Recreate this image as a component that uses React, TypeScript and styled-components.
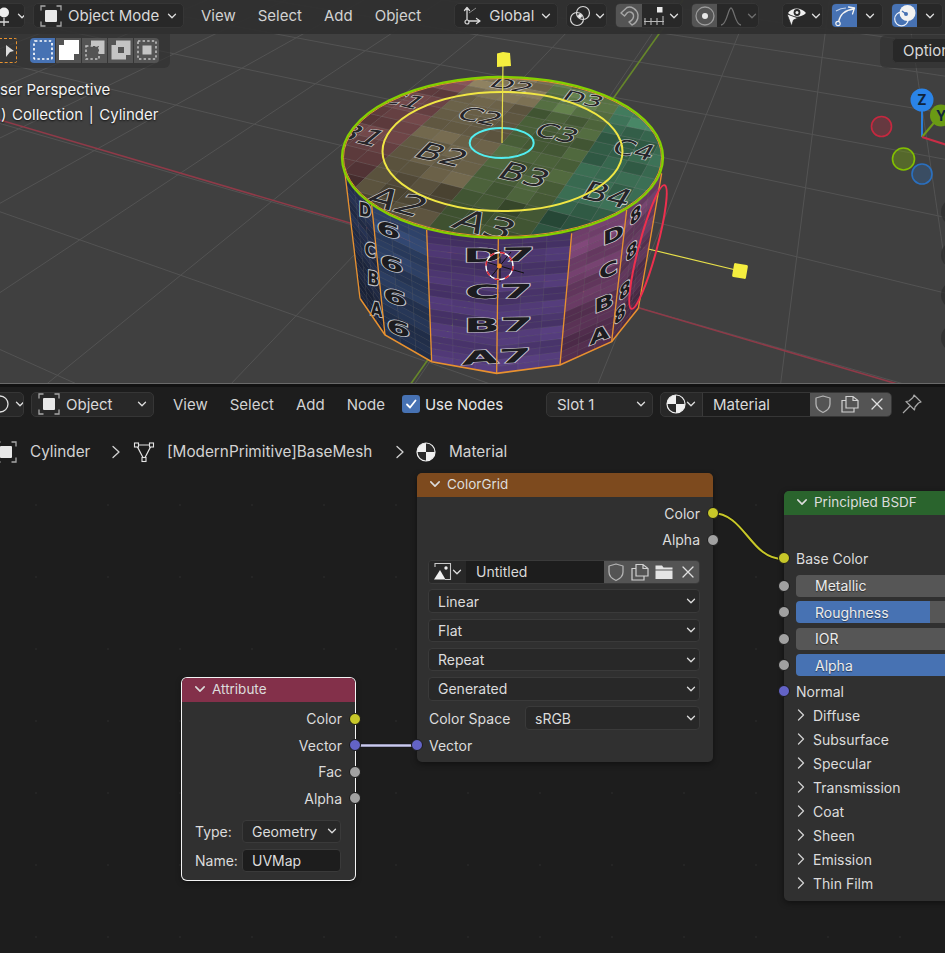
import React from "react";
import styled, { createGlobalStyle } from "styled-components";

const Global = createGlobalStyle`
  html, body { margin: 0; padding: 0; background: #1d1d1d; }
  body { font-family: Inter, "Noto Sans", "Liberation Sans", sans-serif; }
  svg { flex: none; }
`;

/* ---------- scene geometry ---------- */
const zx = (z: number) => z / 3 + 330;
const zy = (z: number) => z / 3 + 60;
const noise = (a: number, b: number) => {
  const s = Math.sin(a * 12.9898 + b * 78.233) * 43758.5453;
  return s - Math.floor(s);
};
const rgb = (c: number[], m: number) =>
  `rgb(${Math.round(c[0] * m)},${Math.round(c[1] * m)},${Math.round(c[2] * m)})`;

const VPX = [-1400, -280];
const VPY = [865, -280];
const groundLines = () => {
  const out: { x1: number; y1: number; x2: number; y2: number }[] = [];
  for (let k = -4; k <= 6; k++) {
    const d = 1 / (1 / 546 + 0.000273 * k);
    const gy = d - 280;
    const gx = 683 - 0.709 * gy;
    const t = 4;
    out.push({ x1: VPX[0], y1: VPX[1], x2: VPX[0] + (gx - VPX[0]) * t, y2: VPX[1] + (gy - VPX[1]) * t });
  }
  for (let k = -10; k <= 3; k++) {
    const d = 1 / (1 / 1895 - 0.000035 * k);
    const rx = d - 1400;
    const ry = 120 + 0.294 * rx;
    const t = 4;
    out.push({ x1: VPY[0], y1: VPY[1], x2: VPY[0] + (rx - VPY[0]) * t, y2: VPY[1] + (ry - VPY[1]) * t });
  }
  return out;
};
const GROUND = groundLines();

const X2 = (r: number) => 200 + 145 * r - 10 * r * r;
const Y2 = (r: number) => 425 - 152 * r + 12 * r * r;
const top = (c: number, r: number): [number, number] => [
  zx(X2(r) + (c - 2) * (265 - 17 * r)),
  zy(Y2(r) + (c - 2) * (70 - 10 * r)),
];

const TOP_COL: Record<number, number[]> = {
  0: [100, 62, 64],
  1: [108, 68, 70],
  2: [112, 102, 76],
  3: [80, 104, 62],
  4: [58, 108, 82],
  5: [58, 108, 82],
};
const rowMul = (r: number) => (r < 0 ? 0.72 : r < 1 ? 0.76 : r < 3 ? 0.95 : 1.14);

const topCells = (() => {
  const out: { p: string; f: string }[] = [];
  for (let cc = 0; cc < 24; cc++) {
    for (let rr = 0; rr < 24; rr++) {
      const c = 0.5 + cc * 0.25;
      const r = -1.5 + rr * 0.25;
      const pts = [top(c, r), top(c + 0.25, r), top(c + 0.25, r + 0.25), top(c, r + 0.25)];
      const band = Math.min(5, Math.max(0, Math.floor(c + 0.5)));
      const rowI = Math.floor(r + 0.5);
      const n = 0.84 + noise(cc, rr) * 0.28;
      out.push({
        p: pts.map((q) => q.map((v) => v.toFixed(1)).join(",")).join(" "),
        f: rgb(TOP_COL[band], rowMul(rowI) * n),
      });
    }
  }
  return out;
})();

const topLabels: [string, number, number][] = [
  ["A2", 2, 0], ["A3", 3, 0], ["B1", 1, 1], ["B2", 2, 1], ["B3", 3, 1], ["B4", 4, 1],
  ["C1", 1, 2], ["C2", 2, 2], ["C3", 3, 2], ["C4", 4, 2], ["D2", 2, 3], ["D3", 3, 3],
];
const topMatrix = (c: number, r: number) => {
  const [px, py] = top(c, r);
  const ux = (265 - 17 * r) / 3;
  const uy = (70 - 10 * r) / 3;
  const vx = (145 - 20 * r - 17 * (c - 2)) / 3;
  const vy = (-152 + 24 * r - 10 * (c - 2)) / 3;
  const a = (r === 0 ? 0.62 : r === 1 ? 0.55 : 0.5) / 26;
  const b = 0.34 / 14.3;
  return `matrix(${ux * a} ${uy * a} ${-vx * b} ${-vy * b} ${px} ${py})`;
};

const SIDE_TOP = [[45, 340], [125, 435], [290, 510], [505, 535], [725, 520], [890, 450], [995, 340]];
const SIDE_BOT = [[90, 715], [165, 825], [305, 905], [500, 940], [690, 915], [845, 845], [925, 745]];
const SIDE_BASE = [
  [38, 50, 82],
  [48, 68, 108],
  [76, 54, 112],
  [78, 56, 114],
  [118, 66, 112],
  [108, 62, 102],
];
const lerp = (a: number, b: number, t: number) => a + (b - a) * t;
const sidePoint = (f: number, s: number, t: number) => {
  const tx = lerp(SIDE_TOP[f][0], SIDE_TOP[f + 1][0], s);
  const ty = lerp(SIDE_TOP[f][1], SIDE_TOP[f + 1][1], s);
  const bx = lerp(SIDE_BOT[f][0], SIDE_BOT[f + 1][0], s);
  const by = lerp(SIDE_BOT[f][1], SIDE_BOT[f + 1][1], s);
  return [zx(lerp(tx, bx, t)).toFixed(1), zy(lerp(ty, by, t)).toFixed(1)].join(",");
};
const sideCells = (() => {
  const out: { p: string; f: string }[] = [];
  for (let f = 0; f < 6; f++) {
    for (let i = 0; i < 3; i++) {
      for (let j = 0; j < 20; j++) {
        const s0 = i / 3;
        const s1 = (i + 1) / 3;
        const t0 = j / 20;
        const t1 = (j + 1) / 20;
        const wave = j % 4 < 2 ? 0.91 : 1.04;
        const fade = f < 2 ? 1.05 - t0 * 0.4 : f >= 4 ? 1.06 - t0 * 0.42 : 0.95 + t0 * 0.12;
        out.push({
          p: [sidePoint(f, s0, t0), sidePoint(f, s1, t0), sidePoint(f, s1, t1), sidePoint(f, s0, t1)].join(" "),
          f: rgb(SIDE_BASE[f], wave * fade * (0.95 + noise(f * 3 + i, j) * 0.1)),
        });
      }
    }
  }
  return out;
})();

type SideLabel = [string, number, number, number, number];
const sideLabels: SideLabel[] = [
  ["D", 105, 450, 0.8, 12], ["C", 120, 570, 0.8, 12], ["B", 130, 655, 0.8, 12], ["A", 140, 748, 0.8, 12],
  ["6", 175, 510, 1.8, 17], ["6", 185, 612, 1.8, 17], ["6", 195, 712, 1.8, 17], ["6", 205, 805, 1.8, 17],
  ["D7", 507, 585, 2.5, -1], ["C7", 507, 695, 2.5, -1], ["B7", 505, 795, 2.5, -1], ["A7", 500, 890, 2.5, -3],
  ["D", 850, 525, 1.35, -22], ["C", 835, 630, 1.35, -22], ["B", 822, 730, 1.35, -22], ["A", 808, 825, 1.35, -22],
  ["8", 917, 465, 0.9, -42], ["8", 905, 572, 0.9, -42], ["8", 885, 690, 0.9, -42], ["8", 870, 762, 0.9, -42],
];

const CylinderScene = () => (
  <SceneSvg viewBox="0 0 945 383">
    <defs>
      <clipPath id="disc">
        <ellipse cx="502.5" cy="157.5" rx="160.5" ry="80.5" />
      </clipPath>
    </defs>
    {GROUND.map((l, i) => (
      <line key={i} {...l} stroke="#535353" strokeWidth="1" />
    ))}
    <line x1="0" y1="120" x2="945" y2="398" stroke="#8f3a48" strokeWidth="1.6" />
    <line x1="683" y1="0" x2="405" y2="392" stroke="#66872a" strokeWidth="1.6" />
    <line x1="640" y1="247" x2="740" y2="271" stroke="#e8e04a" strokeWidth="1.2" />
    <rect x="733" y="264" width="14" height="14" rx="1.5" fill="#f5ee3f" transform="rotate(10 740 271)" />

    {sideCells.map((c, i) => (
      <polygon key={i} points={c.p} fill={c.f} stroke="rgba(255,255,255,0.07)" strokeWidth="0.6" />
    ))}
    {sideLabels.map(([t, x, y, sx, sk], i) => (
      <SideText
        key={i}
        transform={`translate(${zx(x)} ${zy(y)}) skewY(${sk}) scale(${sx} 1)`}
        textAnchor="middle"
        dominantBaseline="central"
        fontSize="19"
      >
        {t}
      </SideText>
    ))}
    {SIDE_TOP.map((p, i) => (
      <line
        key={i}
        x1={zx(p[0])}
        y1={zy(p[1])}
        x2={zx(SIDE_BOT[i][0])}
        y2={zy(SIDE_BOT[i][1])}
        stroke="#e8912f"
        strokeWidth="1.3"
      />
    ))}
    <polyline
      points={SIDE_BOT.map((p) => `${zx(p[0])},${zy(p[1])}`).join(" ")}
      fill="none"
      stroke="#e8912f"
      strokeWidth="1.6"
    />

    <g clipPath="url(#disc)">
      {topCells.map((c, i) => (
        <polygon key={i} points={c.p} fill={c.f} stroke="rgba(255,255,255,0.13)" strokeWidth="0.6" />
      ))}
      {topLabels.map(([t, c, r]) => (
        <LabelText key={t} transform={topMatrix(c, r)} textAnchor="middle" dominantBaseline="central" fontSize="20">
          {t}
        </LabelText>
      ))}
    </g>
    <ellipse cx="502.5" cy="157.5" rx="159" ry="79" fill="none" stroke="#e8912f" strokeWidth="1" />
    <ellipse cx="502.5" cy="157.5" rx="160.5" ry="80.5" fill="none" stroke="#84d000" strokeWidth="2.3" />
    <ellipse cx="502.5" cy="151.5" rx="120" ry="59.5" fill="none" stroke="#f0e644" strokeWidth="2" />
    <ellipse cx="501.7" cy="143" rx="32" ry="15" fill="none" stroke="#52eef0" strokeWidth="2" />
    <line x1="502" y1="143" x2="503" y2="60" stroke="#e8e04a" strokeWidth="1.2" />
    <path d="M497 53.5 L503 52 L510 53 L511 66 L497 67 Z" fill="#f5ee3f" />

    <ellipse cx="648" cy="247" rx="9" ry="64" transform="rotate(15 648 247)" fill="none" stroke="#ee2f4e" strokeWidth="2" />

    <g fill="none">
      <line x1="500" y1="250" x2="500" y2="282" stroke="#111" strokeWidth="1" />
      <line x1="486" y1="262" x2="524" y2="273" stroke="#111" strokeWidth="1" />
      <line x1="490" y1="278" x2="511" y2="252" stroke="#111" strokeWidth="1" />
      <circle cx="499.5" cy="266" r="13.5" stroke="#ffffff" strokeWidth="1.4" />
      <circle cx="499.5" cy="266" r="13.5" stroke="#d8202e" strokeWidth="1.4" strokeDasharray="5 5.6" />
    </g>
    <circle cx="499.5" cy="266" r="2.4" fill="#f0902a" />

    <line x1="922" y1="137" x2="922" y2="108" stroke="#2a7fdc" strokeWidth="2" />
    <line x1="922" y1="137" x2="938" y2="118" stroke="#6f9a18" strokeWidth="2" />
    <line x1="922" y1="137" x2="947" y2="145" stroke="#c92d46" strokeWidth="2" />
    <circle cx="881.5" cy="126.5" r="10" fill="rgba(200,40,64,0.28)" stroke="#c6283f" strokeWidth="1.6" />
    <circle cx="903.5" cy="159" r="11" fill="rgba(120,170,10,0.38)" stroke="#82c000" strokeWidth="1.6" />
    <circle cx="922" cy="174" r="10" fill="rgba(42,110,190,0.28)" stroke="#2a70c0" strokeWidth="1.6" />
    <circle cx="922" cy="100" r="11.5" fill="#2a84e8" />
    <circle cx="941" cy="115.5" r="11" fill="#6a9a14" />
    <AxisText x="922" y="105" textAnchor="middle">Z</AxisText>
    <AxisText x="941" y="120.5" textAnchor="middle">Y</AxisText>
  </SceneSvg>
);

/* ---------- styled parts ---------- */
const Page = styled.div`
  width: 945px;
  height: 953px;
  overflow: hidden;
  display: flex;
  flex-direction: column;
  background: #1d1d1d;
  color: #d9d9d9;
  font-size: 15px;
`;
const Viewport = styled.section`
  position: relative;
  height: 383px;
  flex: none;
  background: #404040;
  overflow: hidden;
  border-bottom: 1px solid #6a6a6a;
`;
const SceneSvg = styled.svg`
  position: absolute;
  inset: 0;
  width: 945px;
  height: 383px;
`;
const LabelText = styled.text`
  font-family: "DejaVu Sans", sans-serif;
  fill: #26262a;
  stroke: rgba(225, 225, 225, 0.85);
  stroke-width: 1.6px;
  paint-order: stroke;
  vector-effect: non-scaling-stroke;
`;
const SideText = styled(LabelText)`
  font-weight: 700;
  fill: #1c1c20;
  stroke-width: 2px;
`;
const AxisText = styled.text`
  font-family: Inter, sans-serif;
  font-weight: 700;
  font-size: 14px;
  fill: #10243a;
`;
const ViewHeader = styled.header`
  position: relative;
  height: 34px;
  background: rgba(48, 48, 48, 0.96);
  display: flex;
  align-items: center;
  gap: 8px;
  padding-bottom: 3px;
  box-sizing: border-box;
`;
const Drop = styled.div<{ $w: number; $ml?: number; $mr?: number }>`
  box-sizing: border-box;
  flex: none;
  width: ${(p) => p.$w}px;
  margin-left: ${(p) => p.$ml ?? 0}px;
  margin-right: ${(p) => p.$mr ?? 0}px;
  height: 25px;
  display: flex;
  align-items: center;
  background: #282828;
  border: 1px solid #363636;
  border-radius: 5px;
  overflow: hidden;
  color: #d9d9d9;
`;
const DropLabel = styled.span<{ $pl?: number }>`
  flex: 1;
  white-space: nowrap;
  padding-left: ${(p) => p.$pl ?? 0}px;
`;
const IconSlot = styled.span<{ $w: number; $on?: "blue" | "grey" | "field"; $pl?: number; $divider?: boolean }>`
  flex: none;
  box-sizing: border-box;
  width: ${(p) => p.$w}px;
  height: 100%;
  display: flex;
  align-items: center;
  justify-content: center;
  padding-left: ${(p) => p.$pl ?? 0}px;
  border-right: ${(p) => (p.$divider ? "1px solid #3a3a3a" : "none")};
  background: ${(p) =>
    p.$on === "blue" ? "#4772b3" : p.$on === "grey" ? "#545454" : p.$on === "field" ? "#282828" : "transparent"};
`;
const PinSlot = styled.span`
  flex: none;
  margin-left: 2px;
  width: 22px;
  height: 22px;
  display: flex;
`;
const MenuBar = styled.nav<{ $ml: number; $mr: number }>`
  display: flex;
  gap: 22px;
  margin-left: ${(p) => p.$ml}px;
  margin-right: ${(p) => p.$mr}px;
  flex: none;
`;
const Menu = styled.span`
  color: #d2d2d2;
`;
const Spacer = styled.div`
  flex: 1;
`;
const ToolRow = styled.div`
  position: relative;
  width: 170px;
  height: 34px;
  background: rgba(48, 48, 48, 0.62);
  border-radius: 0 0 6px 0;
  display: flex;
  align-items: center;
  box-sizing: border-box;
  padding: 0 0 2px 30px;
`;
const ToolIcon = styled.div`
  position: absolute;
  left: -8px;
  top: 4px;
  width: 24.5px;
  height: 25px;
  box-sizing: border-box;
  border: 1.5px dashed #e8922e;
  border-radius: 2px;
  display: flex;
  align-items: center;
  justify-content: flex-end;
  padding-right: 1px;
`;
const SegGroup = styled.div`
  display: flex;
  gap: 1px;
  border-radius: 4px;
  overflow: hidden;
`;
const Seg = styled.div<{ $active?: boolean }>`
  width: 25px;
  height: 25px;
  display: flex;
  align-items: center;
  justify-content: center;
  background: ${(p) => (p.$active ? "#4772b3" : "#545454")};
`;
const OverlayText = styled.div`
  position: relative;
  margin-top: 9px;
  color: #f2f2f2;
  font-size: 15px;
  line-height: 25px;
  text-shadow: 0 1px 2px rgba(0, 0, 0, 0.8);
`;
const OverlayLine = styled.div<{ $ws?: number; $ml?: number }>`
  word-spacing: ${(p) => p.$ws ?? 0}px;
  margin-left: ${(p) => p.$ml ?? 0}px;
`;
const OptionsPanel = styled.div`
  position: absolute;
  right: 0;
  top: 35px;
  width: 65px;
  height: 33px;
  background: rgba(48, 48, 48, 0.62);
  border-radius: 6px 0 0 6px;
  padding: 3px 0 0 12px;
  box-sizing: border-box;
  overflow: hidden;
`;
const OptionsBtn = styled.div`
  width: 70px;
  height: 25px;
  box-sizing: border-box;
  background: #282828;
  border: 1px solid #363636;
  border-radius: 5px;
  padding-left: 10px;
  line-height: 23px;
  white-space: nowrap;
`;
const GizmoBtn = styled.div<{ $y: number }>`
  position: absolute;
  left: 941px;
  top: ${(p) => p.$y - 14}px;
  width: 28px;
  height: 28px;
  border-radius: 50%;
  background: rgba(44, 44, 44, 0.7);
`;
const Gap = styled.div`
  height: 3px;
  flex: none;
  background: #121212;
`;
const Editor = styled.section`
  position: relative;
  flex: 1;
  display: flex;
  flex-direction: column;
`;
const NodeHeader = styled.header`
  height: 34px;
  box-sizing: border-box;
  display: flex;
  align-items: center;
  gap: 7px;
  flex: none;
`;
const Check = styled.span`
  width: 18px;
  height: 18px;
  border-radius: 3px;
  background: #4772b3;
  display: flex;
  align-items: center;
  justify-content: center;
  margin-right: 5px;
`;
const CheckWrap = styled.label`
  display: flex;
  align-items: center;
  width: 137px;
  color: #e6e6e6;
  flex: none;
`;
const FieldText = styled.span<{ $w: number; $pl?: number }>`
  flex: none;
  box-sizing: border-box;
  width: ${(p) => p.$w}px;
  height: 100%;
  display: flex;
  align-items: center;
  padding-left: ${(p) => p.$pl ?? 10}px;
  background: #1d1d1d;
  color: #d9d9d9;
`;
const Crumbs = styled.div`
  height: 48px;
  box-sizing: border-box;
  padding-top: 13px;
  flex: none;
  display: flex;
  align-items: center;
  color: #d2d2d2;
  font-size: 15.3px;
  white-space: nowrap;
`;
const CrumbSlot = styled.span<{ $w: number }>`
  flex: none;
  width: ${(p) => p.$w}px;
  display: flex;
  align-items: center;
`;
const CrumbObject = styled.span`
  display: flex;
  margin-left: -5px;
`;
const Canvas = styled.div`
  position: relative;
  flex: 1;
  overflow: hidden;
  background-color: #1d1d1d;
  background-image: radial-gradient(circle, #252525 1px, transparent 1.4px);
  background-size: 72px 72px;
`;
const LinkSvg = styled.svg`
  position: absolute;
  inset: 0;
  width: 945px;
  height: 484px;
`;
const Node = styled.article<{ $x: number; $y: number; $w: number; $selected?: boolean }>`
  position: absolute;
  left: ${(p) => p.$x}px;
  top: ${(p) => p.$y}px;
  width: ${(p) => p.$w}px;
  box-sizing: border-box;
  background: #303030;
  border-radius: 5px;
  font-size: 14px;
  color: #dcdcdc;
  box-shadow: ${(p) => (p.$selected ? "0 0 0 1px #f4f4f4," : "")} 0 2px 6px rgba(0, 0, 0, 0.45);
`;
const NodeTitle = styled.div<{ $bg: string }>`
  height: 24px;
  box-sizing: border-box;
  background: ${(p) => p.$bg};
  border-radius: 5px 5px 0 0;
  display: flex;
  align-items: center;
  gap: 6px;
  padding: 0 0 3px 12px;
  font-size: 13.5px;
`;
const VSpace = styled.div<{ $h: number }>`
  height: ${(p) => p.$h}px;
`;
const Socket = styled.i<{ $side: "l" | "r"; $c: string }>`
  position: absolute;
  top: 50%;
  ${(p) => (p.$side === "l" ? "left: -6px;" : "right: -6px;")}
  width: 10px;
  height: 10px;
  margin-top: -6px;
  border-radius: 50%;
  background: ${(p) => p.$c};
  border: 1px solid #1a1a1a;
`;
const SockRow = styled.div<{ $side: "l" | "r"; $mt?: number }>`
  position: relative;
  height: ${(p) => (p.$mt ? 24 : 26.5)}px;
  margin-top: ${(p) => p.$mt ?? 0}px;
  display: flex;
  align-items: center;
  justify-content: ${(p) => (p.$side === "l" ? "flex-start" : "flex-end")};
  padding: 0 13px 0 12px;
`;
const Widgets = styled.div<{ $tight?: boolean }>`
  display: flex;
  flex-direction: column;
  gap: ${(p) => (p.$tight ? 5.5 : 5.8)}px;
  margin: ${(p) => (p.$tight ? "8px 14px 0 12px" : "7px 13px 0 11px")};
  padding-bottom: ${(p) => (p.$tight ? 8 : 0)}px;
`;
const Select = styled.div<{ $w?: number }>`
  box-sizing: border-box;
  height: 23.5px;
  flex: none;
  width: ${(p) => (p.$w ? `${p.$w}px` : "100%")};
  display: flex;
  align-items: center;
  justify-content: space-between;
  padding: 0 3px 0 9px;
  background: #282828;
  border: 1px solid #3a3a3a;
  border-radius: 4px;
`;
const TextField = styled(Select)`
  background: #1d1d1d;
`;
const FormRow = styled.div`
  display: flex;
  align-items: center;
  justify-content: space-between;
  height: 23.5px;
  padding-left: 1px;
`;
const ImageRow = styled.div`
  display: flex;
  height: 23.5px;
  border-radius: 4px;
  overflow: hidden;
  border: 1px solid #3a3a3a;
  box-sizing: border-box;
`;
const Slider = styled.div<{ $fill: number }>`
  position: relative;
  height: 22px;
  margin: 0 0 4.67px 12px;
  padding-left: 19px;
  display: flex;
  align-items: center;
  border-radius: 4px 0 0 4px;
  color: #ececec;
  text-shadow: 0 1px 1px rgba(0, 0, 0, 0.5);
  background: linear-gradient(
    to right,
    #4772b3 ${(p) => p.$fill}%,
    #565656 ${(p) => p.$fill}%
  );
`;
const SliderRowWrap = styled.div`
  position: relative;
`;
const SliderSocket = styled(Socket)`
  left: -6px;
  top: 11px;
`;
const PanelRow = styled.div`
  height: 24px;
  display: flex;
  align-items: center;
  gap: 8px;
  padding-left: 13px;
`;

/* ---------- icons ---------- */
const Chevron = ({ dim, size = 10 }: { dim?: boolean; size?: number }) => (
  <svg width={size} height={size} viewBox="0 0 10 10">
    <path d="M1.5 3.2 L5 6.8 L8.5 3.2" fill="none" stroke={dim ? "#6e6e6e" : "#dcdcdc"} strokeWidth="1.3" strokeLinecap="round" strokeLinejoin="round" />
  </svg>
);
const ObjectIcon = () => (
  <svg width="22" height="22" viewBox="0 0 22 22">
    <rect x="5" y="5" width="12" height="12" rx="1" fill="#e8e8e8" />
    <path d="M1 5.5 V1 H5.5 M16.5 1 H21 V5.5 M21 16.5 V21 H16.5 M5.5 21 H1 V16.5" fill="none" stroke="#a8a8a8" strokeWidth="1.3" />
  </svg>
);
const ShieldIcon = () => (
  <svg width="18" height="20" viewBox="0 0 18 20">
    <path d="M9 2 L16 4 V10 C16 14 12.5 17 9 18.5 C5.5 17 2 14 2 10 V4 Z" fill="none" stroke="#b4b4b4" strokeWidth="1.3" strokeLinejoin="round" />
  </svg>
);
const CopyIcon = () => (
  <svg width="20" height="20" viewBox="0 0 20 20">
    <path d="M6 14 V2.5 H13 L18 6.5 V14 Z M13 2.5 V6.5 H18" fill="none" stroke="#d0d0d0" strokeWidth="1.2" />
    <path d="M6 6.5 H2 V18 H14 V14" fill="none" stroke="#d0d0d0" strokeWidth="1.2" />
  </svg>
);
const CloseIcon = () => (
  <svg width="14" height="14" viewBox="0 0 14 14">
    <path d="M2 2 L12 12 M12 2 L2 12" stroke="#e0e0e0" strokeWidth="1.3" strokeLinecap="round" />
  </svg>
);
const FolderIcon = () => (
  <svg width="20" height="18" viewBox="0 0 20 18">
    <path d="M1.5 2.5 H8 L9.5 4.5 H18.5 V6.5 H1.5 Z M1.5 7.5 H18.5 V16 H1.5 Z" fill="#e4e4e4" />
  </svg>
);
const BallIcon = ({ size = 20 }: { size?: number }) => (
  <svg width={size} height={size} viewBox="0 0 20 20">
    <circle cx="10" cy="10" r="9" fill="#2a2a2a" stroke="#f0f0f0" strokeWidth="1.2" />
    <path d="M10 10 V1 A9 9 0 0 0 1 10 Z M10 10 V19 A9 9 0 0 0 19 10 Z" fill="#f0f0f0" />
  </svg>
);
const CrumbChevron = () => (
  <svg width="10" height="14" viewBox="0 0 10 14">
    <path d="M2 1.5 L8 7 L2 12.5" fill="none" stroke="#d2d2d2" strokeWidth="1.3" strokeLinecap="round" strokeLinejoin="round" />
  </svg>
);
const MeshIcon = () => (
  <svg width="22" height="22" viewBox="0 0 22 22">
    <path d="M3.5 4 H18.5 L11 18.5 Z" fill="none" stroke="#e4e4e4" strokeWidth="1.2" />
    <rect x="1.5" y="2" width="4" height="4" fill="#1d1d1d" stroke="#e4e4e4" strokeWidth="1.1" />
    <rect x="16.5" y="2" width="4" height="4" fill="#1d1d1d" stroke="#e4e4e4" strokeWidth="1.1" />
    <rect x="9" y="16.5" width="4" height="4" fill="#1d1d1d" stroke="#e4e4e4" strokeWidth="1.1" />
  </svg>
);
const ImageIcon = () => (
  <svg width="19" height="19" viewBox="0 0 19 19">
    <path d="M2 5 V1.5 H17.5 V17.5 H12" fill="none" stroke="#c8c8c8" strokeWidth="1.1" />
    <path d="M1 17.5 L7 8 L12.5 17.5 Z" fill="#f0f0f0" />
    <circle cx="13" cy="6" r="1.7" fill="#f0f0f0" />
  </svg>
);
const PinIcon = () => (
  <svg width="22" height="22" viewBox="0 0 22 22">
    <path d="M13 2 L20 9 L17.5 10 L14 14 L13.5 17 L5 8.5 L8 8 L12 4.5 Z M9 13 L2 20" fill="none" stroke="#a8a8a8" strokeWidth="1.2" strokeLinejoin="round" />
  </svg>
);
const EditorViewIcon = () => (
  <svg width="18" height="24" viewBox="0 0 18 24">
    <circle cx="5" cy="8.5" r="5" fill="#efefef" />
    <path d="M5 14 V22 M0 18 H10" stroke="#d8d8d8" strokeWidth="1.3" />
  </svg>
);
const NodeEditorIcon = () => (
  <svg width="16" height="22" viewBox="0 0 16 22">
    <circle cx="1" cy="11" r="8" fill="none" stroke="#e0e0e0" strokeWidth="1.3" />
  </svg>
);
const TransformIcon = () => (
  <svg width="24" height="24" viewBox="0 0 24 24">
    <path d="M7 4 V17 H19 M4.5 6.5 L7 3.5 L9.5 6.5 M16.5 14.5 L20 17 L16.5 19.5" fill="none" stroke="#d8d8d8" strokeWidth="1.3" strokeLinecap="round" strokeLinejoin="round" />
    <circle cx="7" cy="18" r="2" fill="#282828" stroke="#d8d8d8" strokeWidth="1.2" />
    <path d="M9 9 L16 4" stroke="#8a8a8a" strokeWidth="1" />
  </svg>
);
const LinkIcon = () => (
  <svg width="22" height="22" viewBox="0 0 22 22">
    <circle cx="8" cy="14" r="6.5" fill="none" stroke="#d8d8d8" strokeWidth="1.2" />
    <circle cx="14" cy="8" r="6.5" fill="none" stroke="#d8d8d8" strokeWidth="1.2" />
    <circle cx="11" cy="11" r="2" fill="#efefef" />
  </svg>
);
const MagnetIcon = () => (
  <svg width="22" height="22" viewBox="0 0 22 22">
    <path d="M3 8 L9 2.5 C13 1 19 4 20 10 C20.5 15 17 19 14 20 L11 17 C14 15.5 16 13 15.5 10 C15 7.5 12 6 9.5 7.5 L6.5 11 Z" fill="none" stroke="#a6a6a6" strokeWidth="1.4" strokeLinejoin="round" />
  </svg>
);
const IncrementIcon = () => (
  <svg width="22" height="24" viewBox="0 0 22 24">
    <rect x="14" y="3" width="5.5" height="5.5" fill="#e8e8e8" />
    <path d="M1 17.5 H21 M2 14 V21 M8 14 V21 M14 14 V21 M20 12 V21" stroke="#b8b8b8" strokeWidth="1.1" />
  </svg>
);
const ProportionalIcon = () => (
  <svg width="22" height="22" viewBox="0 0 22 22">
    <circle cx="11" cy="11" r="9" fill="none" stroke="#9a9a9a" strokeWidth="1.3" />
    <circle cx="11" cy="11" r="3" fill="#e8e8e8" />
  </svg>
);
const FalloffIcon = () => (
  <svg width="22" height="22" viewBox="0 0 22 22">
    <path d="M1 20 C7 20 8 3 11 3 C14 3 15 20 21 20" fill="none" stroke="#707070" strokeWidth="1.3" />
  </svg>
);
const VisibilityIcon = () => (
  <svg width="24" height="24" viewBox="0 0 24 24">
    <path d="M4 9 C8 3 17 3 22 9 C17 14 9 14 4 9 Z" fill="#efefef" />
    <circle cx="13" cy="8.5" r="3.4" fill="#282828" />
    <circle cx="13" cy="8.5" r="1.5" fill="#efefef" />
    <path d="M3 10 L14 14 L9.5 16 L7.5 22 Z" fill="#efefef" stroke="#282828" strokeWidth="0.8" />
  </svg>
);
const GizmoIcon = () => (
  <svg width="22" height="22" viewBox="0 0 22 22">
    <path d="M4.5 17 C6 9 11 5 20 4 M14.5 2 L20.5 3 L18.5 9" fill="none" stroke="#f2f2f2" strokeWidth="1.3" strokeLinecap="round" strokeLinejoin="round" />
    <path d="M2 6 C6 3.5 9 3 12 3" fill="none" stroke="#c6d4ea" strokeWidth="1.1" />
    <circle cx="4" cy="18.5" r="2.2" fill="#4772b3" stroke="#f2f2f2" strokeWidth="1.2" />
  </svg>
);
const OverlayIcon = () => (
  <svg width="24" height="24" viewBox="0 0 24 24">
    <circle cx="8.5" cy="15" r="6.8" fill="none" stroke="#e8eef8" strokeWidth="1.2" />
    <circle cx="14.5" cy="9" r="8" fill="#f2f2f2" />
    <circle cx="13" cy="10" r="2" fill="#4772b3" />
    <path d="M13 10 L9 7" stroke="#4772b3" strokeWidth="1.4" />
  </svg>
);
const SelSet = ({ kind }: { kind: number }) => {
  const dash = { fill: "none", stroke: "#c4c4c4", strokeWidth: 1.5, strokeDasharray: "2.4 2.2" };
  return (
    <svg width="22" height="22" viewBox="0 0 22 22">
      {kind === 0 && <rect x="2" y="2" width="18" height="18" rx="1" {...dash} stroke="#ffffff" strokeWidth={1.7} />}
      {kind === 1 && <path d="M6 1 H21 V15 H16 V21 H1 V6 H6 Z" fill="#ffffff" />}
      {kind === 2 && (
        <>
          <rect x="2" y="7" width="13" height="13" {...dash} />
          <path d="M7 1.5 H20.5 V15 H15 V7 H7 Z" fill="#c4c4c4" />
        </>
      )}
      {kind === 3 && <path fillRule="evenodd" d="M6 1.5 H20.5 V16 H16 V20.5 H1.5 V6 H6 Z M8 8 V14 H14 V8 Z" fill="#c4c4c4" />}
      {kind === 4 && (
        <>
          <rect x="2" y="2" width="18" height="18" {...dash} />
          <rect x="6.5" y="6.5" width="9" height="9" fill="#c4c4c4" />
        </>
      )}
    </svg>
  );
};

const ImgBtn = ({ w, children }: { w: number; children: React.ReactNode }) => (
  <IconSlot $w={w} $on="grey">{children}</IconSlot>
);

const Sock = { yellow: "#c7c729", grey: "#a1a1a1", purple: "#6363c7" };
const Out = ({ label, c }: { label: string; c: string }) => (
  <SockRow $side="r">
    {label}
    <Socket $side="r" $c={c} />
  </SockRow>
);
const In = ({ label, c, mt }: { label: string; c: string; mt?: number }) => (
  <SockRow $side="l" $mt={mt}>
    {label}
    <Socket $side="l" $c={c} />
  </SockRow>
);
const Options = ({ label, w }: { label: string; w?: number }) => (
  <Select $w={w}>
    {label}
    <Chevron />
  </Select>
);
const OFF = 469;
const sliders: [string, number][] = [
  ["Metallic", 0],
  ["Roughness", 54],
  ["IOR", 0],
  ["Alpha", 100],
];
const panels = ["Diffuse", "Subsurface", "Specular", "Transmission", "Coat", "Sheen", "Emission", "Thin Film"];

export default function App() {
  return (
    <Page>
      <Global />
      <Viewport>
        <CylinderScene />
        <ViewHeader>
          <Drop $w={33} $ml={-8}>
            <IconSlot $w={31} $pl={8}>
              <EditorViewIcon />
              <Chevron />
            </IconSlot>
          </Drop>
          <Drop $w={151}>
            <IconSlot $w={34}><ObjectIcon /></IconSlot>
            <DropLabel>Object Mode</DropLabel>
            <IconSlot $w={22}><Chevron /></IconSlot>
          </Drop>
          <MenuBar $ml={9} $mr={25}>
            <Menu>View</Menu>
            <Menu>Select</Menu>
            <Menu>Add</Menu>
            <Menu>Object</Menu>
          </MenuBar>
          <Drop $w={104}>
            <IconSlot $w={34}><TransformIcon /></IconSlot>
            <DropLabel>Global</DropLabel>
            <IconSlot $w={22}><Chevron /></IconSlot>
          </Drop>
          <Drop $w={41}>
            <IconSlot $w={26}><LinkIcon /></IconSlot>
            <IconSlot $w={13}><Chevron /></IconSlot>
          </Drop>
          <Drop $w={68}>
            <IconSlot $w={26} $on="grey"><MagnetIcon /></IconSlot>
            <IconSlot $w={24}><IncrementIcon /></IconSlot>
            <IconSlot $w={16}><Chevron /></IconSlot>
          </Drop>
          <Drop $w={68}>
            <IconSlot $w={25} $on="grey"><ProportionalIcon /></IconSlot>
            <IconSlot $w={28}><FalloffIcon /></IconSlot>
            <IconSlot $w={13}><Chevron dim /></IconSlot>
          </Drop>
          <Spacer />
          <Drop $w={41}>
            <IconSlot $w={26}><VisibilityIcon /></IconSlot>
            <IconSlot $w={13}><Chevron /></IconSlot>
          </Drop>
          <Drop $w={52}>
            <IconSlot $w={25} $on="blue"><GizmoIcon /></IconSlot>
            <IconSlot $w={25}><Chevron /></IconSlot>
          </Drop>
          <Drop $w={52} $mr={2}>
            <IconSlot $w={25} $on="blue"><OverlayIcon /></IconSlot>
            <IconSlot $w={25}><Chevron /></IconSlot>
          </Drop>
        </ViewHeader>
        <ToolRow>
          <ToolIcon>
            <svg width="10" height="12" viewBox="0 0 10 12">
              <path d="M1 0 L9 6 L5 7 L1 12 Z" fill="#dcdcdc" />
            </svg>
          </ToolIcon>
          <SegGroup>
            {[0, 1, 2, 3, 4].map((k) => (
              <Seg key={k} $active={k === 0}><SelSet kind={k} /></Seg>
            ))}
          </SegGroup>
        </ToolRow>
        <OverlayText>
          <OverlayLine>ser Perspective</OverlayLine>
          <OverlayLine $ml={1} $ws={1.4}>) Collection | Cylinder</OverlayLine>
        </OverlayText>
        <OptionsPanel>
          <OptionsBtn>Options</OptionsBtn>
        </OptionsPanel>
        {[212, 255, 295, 338].map((y) => (
          <GizmoBtn key={y} $y={y} />
        ))}
      </Viewport>
      <Gap />
      <Editor>
        <NodeHeader>
          <Drop $w={31} $ml={-7}>
            <IconSlot $w={29} $pl={6}>
              <NodeEditorIcon />
              <Chevron />
            </IconSlot>
          </Drop>
          <Drop $w={123}>
            <IconSlot $w={34}><ObjectIcon /></IconSlot>
            <DropLabel>Object</DropLabel>
            <IconSlot $w={22}><Chevron /></IconSlot>
          </Drop>
          <MenuBar $ml={12} $mr={10}>
            <Menu>View</Menu>
            <Menu>Select</Menu>
            <Menu>Add</Menu>
            <Menu>Node</Menu>
          </MenuBar>
          <CheckWrap>
            <Check>
              <svg width="12" height="12" viewBox="0 0 12 12">
                <path d="M2 6.5 L5 9.5 L10.5 2.5" fill="none" stroke="#fff" strokeWidth="1.8" strokeLinecap="round" strokeLinejoin="round" />
              </svg>
            </Check>
            Use Nodes
          </CheckWrap>
          <Drop $w={107}>
            <DropLabel $pl={10}>Slot 1</DropLabel>
            <IconSlot $w={22}><Chevron /></IconSlot>
          </Drop>
          <Drop $w={232}>
            <IconSlot $w={42} $divider>
              <BallIcon />
              <Chevron />
            </IconSlot>
            <FieldText $w={107} $pl={10}>Material</FieldText>
            <ImgBtn w={27}><ShieldIcon /></ImgBtn>
            <ImgBtn w={27}><CopyIcon /></ImgBtn>
            <ImgBtn w={27}><CloseIcon /></ImgBtn>
          </Drop>
          <PinSlot><PinIcon /></PinSlot>
        </NodeHeader>
        <Crumbs>
          <CrumbSlot $w={30}><CrumbObject><ObjectIcon /></CrumbObject></CrumbSlot>
          <CrumbSlot $w={81}>Cylinder</CrumbSlot>
          <CrumbSlot $w={22}><CrumbChevron /></CrumbSlot>
          <CrumbSlot $w={34}><MeshIcon /></CrumbSlot>
          <CrumbSlot $w={228}>[ModernPrimitive]BaseMesh</CrumbSlot>
          <CrumbSlot $w={21}><CrumbChevron /></CrumbSlot>
          <CrumbSlot $w={33}><BallIcon /></CrumbSlot>
          <CrumbSlot $w={70}>Material</CrumbSlot>
        </Crumbs>
        <Canvas>
          <LinkSvg viewBox={`0 ${OFF} 945 484`}>
            <line x1="355" y1="745.5" x2="417" y2="745.5" stroke="#17171f" strokeWidth="4" />
            <line x1="355" y1="745.5" x2="417" y2="745.5" stroke="#c9c9ee" strokeWidth="2.4" />
            <path d="M712 513 C745 513 750 559 783 559" fill="none" stroke="#141414" strokeWidth="3.4" />
            <path d="M712 513 C745 513 750 559 783 559" fill="none" stroke="#c7c729" strokeWidth="2" />
          </LinkSvg>

          <Node $x={182} $y={678 - OFF} $w={173} $selected>
            <NodeTitle $bg="#83304a"><Chevron size={12} />Attribute</NodeTitle>
            <VSpace $h={3.5} />
            <Out label="Color" c={Sock.yellow} />
            <Out label="Vector" c={Sock.purple} />
            <Out label="Fac" c={Sock.grey} />
            <Out label="Alpha" c={Sock.grey} />
            <Widgets $tight>
              <FormRow>
                Type:
                <Options label="Geometry" w={99} />
              </FormRow>
              <FormRow>
                Name:
                <TextField $w={99}>UVMap</TextField>
              </FormRow>
            </Widgets>
          </Node>

          <Node $x={417} $y={473 - OFF} $w={296}>
            <NodeTitle $bg="#7d4a1e"><Chevron size={12} />ColorGrid</NodeTitle>
            <VSpace $h={3} />
            <Out label="Color" c={Sock.yellow} />
            <Out label="Alpha" c={Sock.grey} />
            <Widgets>
              <ImageRow>
                <IconSlot $w={37} $on="field">
                  <ImageIcon />
                  <Chevron />
                </IconSlot>
                <FieldText $w={138}>Untitled</FieldText>
                <ImgBtn w={24}><ShieldIcon /></ImgBtn>
                <ImgBtn w={24}><CopyIcon /></ImgBtn>
                <ImgBtn w={24}><FolderIcon /></ImgBtn>
                <ImgBtn w={24}><CloseIcon /></ImgBtn>
              </ImageRow>
              <Options label="Linear" />
              <Options label="Flat" />
              <Options label="Repeat" />
              <Options label="Generated" />
              <FormRow>
                Color Space
                <Options label="sRGB" w={175} />
              </FormRow>
            </Widgets>
            <VSpace $h={2} />
            <In label="Vector" c={Sock.purple} />
            <VSpace $h={4} />
          </Node>

          <Node $x={784} $y={491 - OFF} $w={260}>
            <NodeTitle $bg="#2a642d"><Chevron size={12} />Principled BSDF</NodeTitle>
            <VSpace $h={30} />
            <In label="Base Color" c={Sock.yellow} />
            <VSpace $h={3} />
            {sliders.map(([l, f]) => (
              <SliderRowWrap key={l}>
                <Slider $fill={f}>{l}</Slider>
                <SliderSocket $side="l" $c={Sock.grey} />
              </SliderRowWrap>
            ))}
            <In label="Normal" c={Sock.purple} mt={-2} />
            {panels.map((p) => (
              <PanelRow key={p}>
                <svg width="8" height="14" viewBox="0 0 8 14">
                  <path d="M1.5 2 L6.5 7 L1.5 12" fill="none" stroke="#d0d0d0" strokeWidth="1.3" strokeLinecap="round" strokeLinejoin="round" />
                </svg>
                {p}
              </PanelRow>
            ))}
            <VSpace $h={6} />
          </Node>
        </Canvas>
      </Editor>
    </Page>
  );
}
